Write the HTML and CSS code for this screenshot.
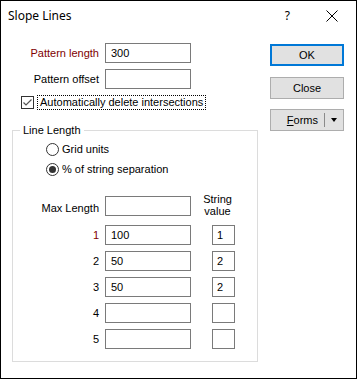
FILE: index.html
```html
<!DOCTYPE html>
<html lang="en">
<head>
  <meta charset="UTF-8">
  <title>Slope Lines</title>
  <link rel="stylesheet" href="styles.css">
</head>
<body>
  <div class="window">
    <div class="titlebar">
      <span class="title">Slope Lines</span>
      <span class="help">?</span>
      <span class="close-x">
        <svg width="12" height="12" viewBox="0 0 12 12"><path d="M0.5 0.5 L11.5 11.5 M11.5 0.5 L0.5 11.5" stroke="#000" stroke-width="1" fill="none"/></svg>
      </span>
    </div>

    <div class="content">
      <div class="left">
        <div class="fields">
          <label class="field-label required">Pattern length</label>
          <div class="input">300</div>
          <label class="field-label">Pattern offset</label>
          <div class="input"></div>
        </div>

        <div class="check-row">
          <span class="checkbox">
            <svg width="11" height="11" viewBox="0 0 11 11"><path d="M1.5 5.5 L4 8 L9.5 2.5" stroke="#555" stroke-width="1.2" fill="none"/></svg>
          </span>
          <span class="check-label">Automatically delete intersections</span>
        </div>

        <fieldset class="group">
          <legend>Line Length</legend>
          <div class="radio-row">
            <span class="radio"></span>
            <span>Grid units</span>
          </div>
          <div class="radio-row">
            <span class="radio checked"></span>
            <span>% of string separation</span>
          </div>

          <div class="lengths">
            <label class="field-label">Max Length</label>
            <div class="input max"></div>
            <div class="col-head">String<br>value</div>

            <label class="field-label required">1</label>
            <div class="input">100</div>
            <div class="input small">1</div>

            <label class="field-label">2</label>
            <div class="input">50</div>
            <div class="input small">2</div>

            <label class="field-label">3</label>
            <div class="input">50</div>
            <div class="input small">2</div>

            <label class="field-label">4</label>
            <div class="input"></div>
            <div class="input small"></div>

            <label class="field-label">5</label>
            <div class="input"></div>
            <div class="input small"></div>
          </div>
        </fieldset>
      </div>

      <div class="buttons">
        <button class="btn default">OK</button>
        <button class="btn">Close</button>
        <button class="btn split"><span class="split-text"><u>F</u>orms</span><span class="split-sep"></span><span class="arrow"></span></button>
      </div>
    </div>
  </div>
</body>
</html>
```

FILE: styles.css
```css
body {
  margin: 0;
  font-family: "Liberation Sans", Arial, sans-serif;
  font-size: 11px;
  color: #000;
  background: #fff;
}
.window {
  width: 357px;
  height: 379px;
  box-sizing: border-box;
  border: 1px solid #000;
  background: #fff;
}
.titlebar {
  height: 29px;
  display: flex;
  align-items: center;
  padding-left: 7px;
}
.title {
  font-family: "Noto Sans", sans-serif;
  font-size: 12px;
  flex: 1;
}
.help {
  font-family: "Noto Sans", sans-serif;
  font-size: 12px;
  margin-right: 36px;
}
.close-x {
  display: flex;
  margin-right: 18px;
}
.content {
  display: flex;
  padding-top: 13px;
}
.left {
  flex: 1;
}
.fields {
  display: grid;
  grid-template-columns: 98px 86px;
  column-gap: 6px;
  row-gap: 6px;
  align-items: center;
}
.field-label {
  text-align: right;
  color: #000;
}
.field-label.required {
  color: #800000;
}
.input {
  height: 20px;
  box-sizing: border-box;
  border: 1px solid #7a7a7a;
  padding-left: 5px;
  line-height: 18px;
}
.input.small {
  width: 23px;
  padding-left: 4px;
}
.check-row {
  display: flex;
  align-items: center;
  margin: 6px 0 0 20px;
}
.checkbox {
  width: 13px;
  height: 13px;
  box-sizing: border-box;
  border: 1px solid #333;
  display: flex;
  align-items: center;
  justify-content: center;
}
.check-label {
  margin-left: 3px;
  padding: 0 2px 0 2px;
  border: 1px dotted #000;
  line-height: 13px;
}
.group {
  margin: 14px 0 0 11px;
  width: 246px;
  box-sizing: border-box;
  padding: 0 0 12px 0;
  border: 1px solid #dcdcdc;
}
.group legend {
  margin-left: 7px;
  padding: 0 3px;
  line-height: 13px;
}
.radio-row {
  display: flex;
  align-items: center;
  gap: 3px;
  margin: 6px 0 0 33px;
  line-height: 13px;
}
.radio-row + .radio-row {
  margin-top: 7px;
}
.radio {
  width: 13px;
  height: 13px;
  box-sizing: border-box;
  border: 1px solid #333;
  border-radius: 50%;
  display: flex;
  align-items: center;
  justify-content: center;
}
.radio.checked::after {
  content: "";
  width: 7px;
  height: 7px;
  border-radius: 50%;
  background: #333;
}
.lengths {
  display: grid;
  grid-template-columns: 86px 86px 23px;
  column-gap: 6px;
  row-gap: 6px;
  align-items: center;
  margin-top: 20px;
}
.lengths .input.small {
  margin-left: 15px;
}
.lengths .input.max {
  margin-bottom: 3px;
}
.col-head {
  margin-left: 3px;
  width: 35px;
  text-align: center;
  line-height: 12px;
  margin-top: -6px;
}
.buttons {
  width: 74px;
  margin-right: 12px;
  padding-top: 1px;
  display: flex;
  flex-direction: column;
}
.btn {
  height: 22px;
  box-sizing: border-box;
  background: #e1e1e1;
  border: 1px solid #adadad;
  font-family: "Liberation Sans", Arial, sans-serif;
  font-size: 11px;
  color: #000;
  padding: 0;
  margin-bottom: 10px;
}
.btn.default {
  border: 2px solid #0078d7;
  margin-bottom: 11px;
}
.split {
  display: flex;
  align-items: center;
}
.split-text {
  flex: 1;
  text-align: right;
  padding-right: 6px;
}
.split-sep {
  width: 1px;
  height: 14px;
  background: #8a8a8a;
}
.arrow {
  margin: 0 6px 0 6px;
  width: 0;
  height: 0;
  border-left: 3.5px solid transparent;
  border-right: 3.5px solid transparent;
  border-top: 4px solid #000;
}
```
